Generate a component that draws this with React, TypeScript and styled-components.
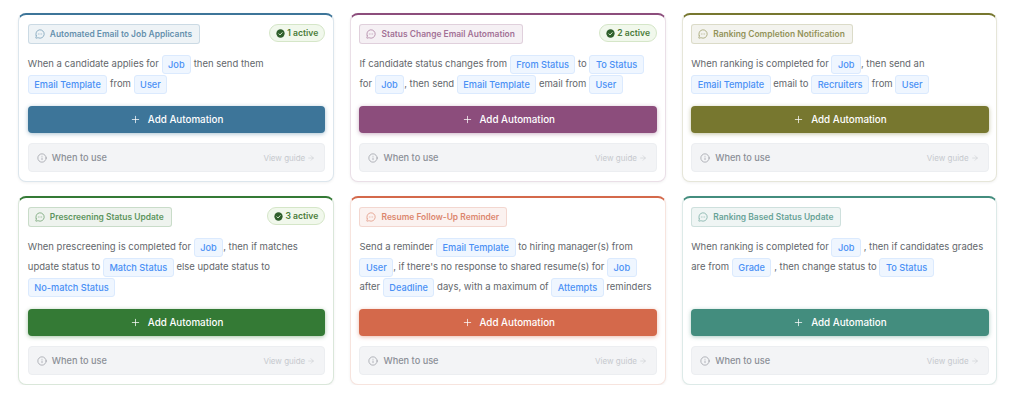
import React from "react";
import styled, { createGlobalStyle } from "styled-components";
import { ArrowRight, Info, MessageCircleMore, Plus } from "lucide-react";

const GlobalStyle = createGlobalStyle`
  * { box-sizing: border-box; }
  body {
    margin: 0;
    background: #ffffff;
    font-family: Inter, "Liberation Sans", sans-serif;
  }
`;

const Grid = styled.div`
  display: grid;
  grid-template-columns: repeat(3, 315.7px);
  column-gap: 16px;
  row-gap: 14px;
  padding: 13px 0 0 18.3px;
`;

const Card = styled.div<{ $color: string }>`
  display: flex;
  flex-direction: column;
  padding: 9px 7.7px 9px 8.5px;
  background: #ffffff;
  border: 1px solid ${props => props.$color}2e;
  border-top: 2px solid ${props => props.$color};
  border-radius: 8px;
  box-shadow: 0 1px 3px rgba(0, 0, 0, 0.06);
`;

const Header = styled.div`
  display: flex;
  justify-content: space-between;
  align-items: flex-start;
  height: 20px;
`;

const Tag = styled.div<{ $color: string }>`
  display: flex;
  align-items: center;
  gap: 5px;
  height: 20px;
  padding: 0 7px 0 6px;
  font-size: 8.45px;
  font-weight: 600;
  color: ${props => props.$color};
  opacity: 0.8;
  background: ${props => props.$color}1a;
  border: 1px solid ${props => props.$color}40;
  border-radius: 3px;
`;

const ActiveBadge = styled.div`
  display: flex;
  align-items: center;
  gap: 2px;
  height: 18px;
  padding: 0 6px 0 6px;
  font-size: 8.6px;
  font-weight: 600;
  color: #4a7c3a;
  background: #f1f8ec;
  border: 1px solid #d5e6c8;
  border-radius: 9px;
`;

const Description = styled.div`
  margin-top: 10px;
  font-size: 9.5px;
  line-height: 20px;
  color: #63676c;
`;

const Chip = styled.span`
  display: inline-flex;
  align-items: center;
  height: 19px;
  padding: 1px 5.5px 0;
  vertical-align: middle;
  font-size: 9.2px;
  font-weight: 500;
  line-height: 1;
  color: #4a90f5;
  background: #eff6ff;
  border: 1px solid #dbeafe;
  border-radius: 3px;
`;

const AddButton = styled.button<{ $color: string }>`
  display: flex;
  align-items: center;
  justify-content: center;
  gap: 7px;
  width: 100%;
  height: 27px;
  padding: 0;
  font-family: inherit;
  font-size: 9.8px;
  font-weight: 500;
  color: #ffffff;
  background: ${props => props.$color};
  border: 0;
  border-radius: 4px;
  box-shadow: 0 1px 4px ${props => props.$color}70;
`;

const Spacer = styled.div`
  min-height: 12px;
  flex: 1;
`;

const Guide = styled.div`
  display: flex;
  align-items: center;
  justify-content: space-between;
  height: 29px;
  margin-top: 10px;
  padding: 0 9px 0 8px;
  background: #f3f4f6;
  border: 1px solid #eceef1;
  border-radius: 4px;
`;

const GuideLabel = styled.div`
  display: flex;
  align-items: center;
  gap: 5px;
  font-size: 9.2px;
  font-weight: 500;
  color: #8b8f96;
`;

const GuideLink = styled.div`
  display: flex;
  align-items: center;
  gap: 2px;
  font-size: 8px;
  color: #c6c9ce;
`;

const CheckMark = () => (
  <svg width="9" height="9" viewBox="0 0 10 10">
    <circle cx="5" cy="5" r="4.6" fill="#2f5f2c" />
    <path d="M3 5.1l1.5 1.5L7.1 3.8" fill="none" stroke="#dff0d6" strokeWidth="1.1" />
  </svg>
);

type Part = string | { chip: string };
const c = (chip: string): Part => ({ chip });

type Automation = {
  title: string;
  color: string;
  active?: number;
  parts: Part[];
};

const AUTOMATIONS: Automation[] = [
  {
    title: "Automated Email to Job Applicants",
    color: "#3d7599",
    active: 1,
    parts: ["When a candidate applies for ", c("Job"), " then send them ", c("Email Template"), " from ", c("User")],
  },
  {
    title: "Status Change Email Automation",
    color: "#8c4d7c",
    active: 2,
    parts: ["If candidate status changes from ", c("From Status"), " to ", c("To Status"), " for ", c("Job"), ", then send ", c("Email Template"), " email from ", c("User")],
  },
  {
    title: "Ranking Completion Notification",
    color: "#77772f",
    parts: ["When ranking is completed for ", c("Job"), ", then send an ", c("Email Template"), " email to ", c("Recruiters"), " from ", c("User")],
  },
  {
    title: "Prescreening Status Update",
    color: "#347a35",
    active: 3,
    parts: ["When prescreening is completed for ", c("Job"), ", then if matches update status to ", c("Match Status"), " else update status to ", c("No-match Status")],
  },
  {
    title: "Resume Follow-Up Reminder",
    color: "#d4694b",
    parts: ["Send a reminder ", c("Email Template"), " to hiring manager(s) from ", c("User"), ", if there's no response to shared resume(s) for ", c("Job"), " after ", c("Deadline"), " days, with a maximum of ", c("Attempts"), " reminders"],
  },
  {
    title: "Ranking Based Status Update",
    color: "#438d7e",
    parts: ["When ranking is completed for ", c("Job"), " , then if candidates grades are from ", c("Grade"), " , then change status to ", c("To Status")],
  },
];

const App = () => (
  <>
    <GlobalStyle />
    <Grid>
      {AUTOMATIONS.map(item => (
        <Card key={item.title} $color={item.color}>
          <Header>
            <Tag $color={item.color}>
              <MessageCircleMore size={10} strokeWidth={1.6} />
              {item.title}
            </Tag>
            {item.active && (
              <ActiveBadge>
                <CheckMark />
                {item.active} active
              </ActiveBadge>
            )}
          </Header>
          <Description>
            {item.parts.map((part, i) =>
              typeof part === "string" ? part : <Chip key={i}>{part.chip}</Chip>
            )}
          </Description>
          <Spacer />
          <AddButton $color={item.color}>
            <Plus size={11} strokeWidth={1.6} />
            Add Automation
          </AddButton>
          <Guide>
            <GuideLabel>
              <Info size={10} strokeWidth={1.5} />
              When to use
            </GuideLabel>
            <GuideLink>
              View guide
              <ArrowRight size={8} strokeWidth={1.6} />
            </GuideLink>
          </Guide>
        </Card>
      ))}
    </Grid>
  </>
);

export default App;
